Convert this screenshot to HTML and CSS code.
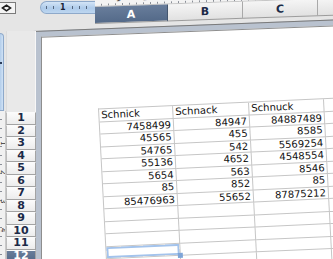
FILE: index.html
```html
<!DOCTYPE html>
<html>
<head>
<meta charset="utf-8">
<link rel="stylesheet" href="styles.css">
</head>
<body>
<div class="app">
  <div class="corner">
    <div class="selall">
      <svg width="12" height="8" viewBox="0 0 12 8"><polygon points="1.5,4 5.5,1.2 9.5,4 5.5,6.8" fill="none" stroke="#1e1e1e" stroke-width="1.6"/></svg>
    </div>
  </div>
  <div class="topbar">
    <div class="hruler">
      <span class="tk"></span><span class="tk"></span><span class="rnum">1</span><span class="tk"></span><span class="tk"></span><span class="tk"></span>
    </div>
    <div class="colheads">
      <div class="colruler">
        <span class="cn">1</span><span class="cn">2</span><span class="cn">3</span>
      </div>
      <div class="colrow">
        <div class="ch sel">A</div>
        <div class="ch">B</div>
        <div class="ch">C</div>
        <div class="ch">D</div>
      </div>
    </div>
  </div>
  <div class="leftcol">
    <div class="vruler">
      <div class="vpill"><span class="vmark"></span></div>
      <div class="vscale">
        <span class="vn">1</span><span class="vn">2</span><span class="vn">3</span><span class="vn">4</span>
      </div>
    </div>
    <div class="rowheads">
      <div class="rh-top"></div>
      <div class="rh">1</div>
      <div class="rh">2</div>
      <div class="rh">3</div>
      <div class="rh">4</div>
      <div class="rh">5</div>
      <div class="rh">6</div>
      <div class="rh">7</div>
      <div class="rh">8</div>
      <div class="rh">9</div>
      <div class="rh">10</div>
      <div class="rh">11</div>
      <div class="rh sel">12</div>
    </div>
  </div>
  <div class="page">
    <div class="frame">
      <div class="sheet">
        <div class="grid">
          <div class="c">Schnick</div><div class="c">Schnack</div><div class="c">Schnuck</div><div class="c"></div>
          <div class="c n">7458499</div><div class="c n">84947</div><div class="c n">84887489</div><div class="c"></div>
          <div class="c n">45565</div><div class="c n">455</div><div class="c n">8585</div><div class="c"></div>
          <div class="c n">54765</div><div class="c n">542</div><div class="c n">5569254</div><div class="c"></div>
          <div class="c n">55136</div><div class="c n">4652</div><div class="c n">4548554</div><div class="c"></div>
          <div class="c n">5654</div><div class="c n">563</div><div class="c n">8546</div><div class="c"></div>
          <div class="c n">85</div><div class="c n">852</div><div class="c n">85</div><div class="c"></div>
          <div class="c n">85476963</div><div class="c n">55652</div><div class="c n">87875212</div><div class="c"></div>
          <div class="c"></div><div class="c"></div><div class="c"></div><div class="c"></div>
          <div class="c"></div><div class="c"></div><div class="c"></div><div class="c"></div>
          <div class="c"></div><div class="c"></div><div class="c"></div><div class="c"></div>
          <div class="c act"></div><div class="c"></div><div class="c"></div><div class="c"></div>
          <div class="c"></div><div class="c"></div><div class="c"></div><div class="c"></div>
        </div>
      </div>
    </div>
  </div>
</div>
</body>
</html>
```
FILE: styles.css
```css
* { box-sizing: border-box; }
html, body { margin: 0; padding: 0; }
body {
  width: 333px;
  height: 259px;
  overflow: hidden;
  background: #e5e5e5;
  font-family: "DejaVu Sans", Verdana, sans-serif;
}
.app {
  display: grid;
  grid-template-columns: 33px 300px;
  grid-template-rows: 31px 228px;
  width: 333px;
  height: 259px;
}

/* top-left select-all box */
.corner { padding-top: 2px; }
.selall {
  width: 17px;
  height: 12px;
  margin-left: -1px;
  background: #f4f4f4;
  border: 1px solid #7b7b7b;
  display: flex;
  align-items: center;
  padding-left: 1px;
}

/* top bar */
.topbar {
  display: flex;
  align-items: flex-start;
}
.hruler {
  flex: none;
  margin-left: 7px;
  margin-top: 1px;
  width: 55px;
  height: 13px;
  border: 1px solid #8ea9ca;
  border-right: none;
  border-radius: 7px 0 0 7px;
  background: linear-gradient(#d3e4f6, #aecbea 55%, #bdd6f0);
  display: flex;
  align-items: center;
  gap: 6px;
  padding-left: 5px;
}
.tk { width: 1px; height: 3px; background: #55667e; }
.rnum { font-size: 8px; font-weight: bold; color: #1a2436; line-height: 8px; }

.colheads {
  flex: 1;
  display: flex;
  flex-direction: column;
  transform: skewY(-2deg);
  transform-origin: 0 0;
}
.colruler {
  height: 7px;
  background:
    repeating-linear-gradient(90deg, transparent 0 6px, #8a8f98 6px 7px) bottom / 100% 2px no-repeat,
    #f3f3f3;
  border-bottom: 1px solid #c4c4c4;
  display: flex;
  gap: 20px;
  padding-left: 21px;
  overflow: hidden;
}
.cn {
  font-size: 8px;
  line-height: 8px;
  margin-top: -4px;
  color: #333;
  width: 7px;
}
.colrow { display: flex; height: 17px; }
.ch {
  flex: none;
  width: 75px;
  height: 17px;
  border-right: 1px solid #a9a9a9;
  border-bottom: 1px solid #9c9c9c;
  background: linear-gradient(#f5f5f5, #e1e1e1);
  font: bold 11px "DejaVu Sans", Verdana, sans-serif;
  color: #1c2a48;
  display: flex;
  align-items: center;
  justify-content: center;
}
.ch.sel {
  width: 73px;
  background: linear-gradient(#687d9b, #546a89);
  color: #fff;
  border-right-color: #44566f;
}

/* left column */
.leftcol {
  display: flex;
  width: 36px;
  position: relative;
  z-index: 2;
}
.vruler {
  width: 6px;
  display: flex;
  flex-direction: column;
}
.vpill {
  margin-top: 2px;
  height: 78px;
  width: 4px;
  border: 1px solid #8ea9ca;
  border-left: none;
  border-radius: 0 5px 0 0;
  background: linear-gradient(90deg, #b3cdea, #cfe2f6);
  display: flex;
  flex-direction: column;
  padding-top: 28px;
}
.vmark { width: 2px; height: 2px; background: #2c3c58; }
.vscale {
  flex: 1;
  width: 6px;
  background:
    repeating-linear-gradient(180deg, transparent 0 8px, #8a8f98 8px 9px) left / 2px 100% no-repeat,
    #f1f1f1;
  border-right: 1px solid #c9c9c9;
  display: flex;
  flex-direction: column;
  gap: 22px;
  padding-top: 30px;
  overflow: hidden;
}
.vn {
  font-size: 7px;
  line-height: 7px;
  color: #333;
  transform: rotate(90deg);
  width: 7px;
  margin-left: -1px;
}
.rowheads {
  width: 30px;
  display: flex;
  flex-direction: column;
}
.rh-top {
  height: 81px;
  flex: none;
  background: #e9e9e9;
  border-right: 1px solid #f7f7f7;
  border-left: 1px solid #dcdcdc;
}
.rh {
  flex: none;
  height: 12.5px;
  border: 1px solid;
  border-color: #fbfbfb #a3a3a3 #a3a3a3 #bcbcbc;
  background: linear-gradient(#fbfbfb, #ececec);
  font: bold 11px/10px "DejaVu Sans", Verdana, sans-serif;
  color: #1c2a48;
  display: flex;
  align-items: center;
  justify-content: center;
}
.rh.sel {
  background: linear-gradient(#687d9b, #546a89);
  color: #fff;
}

/* page */
.page { overflow: visible; }
.frame {
  width: 320px;
  height: 262px;
  transform: skewY(-2.2deg);
  transform-origin: 0 0;
  background: #b9c2cf;
  border-top: 1px solid #7a7a7a;
  border-left: 1px solid #7a7a7a;
  padding: 5px 0 0 7px;
}
.sheet {
  height: 100%;
  background: #fff;
  border-top: 1px solid #8e8e8e;
  border-left: 1px solid #8e8e8e;
  padding: 72.5px 0 0 56px;
}
.grid {
  display: grid;
  grid-template-columns: 74px 76px 75px 70px;
  grid-auto-rows: 12.5px;
  width: max-content;
  border-top: 1px solid #c6c6c6;
  border-left: 1px solid #c6c6c6;
  transform: skewX(3deg) skewY(-0.4deg);
  transform-origin: 0 0;
  font-size: 10px;
  color: #111;
}
.c {
  border-right: 1px solid #c6c6c6;
  border-bottom: 1px solid #c6c6c6;
  padding: 0 2px;
  line-height: 11.5px;
  white-space: nowrap;
  overflow: hidden;
}
.n { text-align: right; }
.c.act {
  box-shadow: inset 0 0 0 2px #a3c3ec;
  position: relative;
  overflow: visible;
}
.c.act::after {
  content: "";
  position: absolute;
  right: -3px;
  bottom: -3px;
  width: 5px;
  height: 5px;
  background: #7ea5d8;
}
```
